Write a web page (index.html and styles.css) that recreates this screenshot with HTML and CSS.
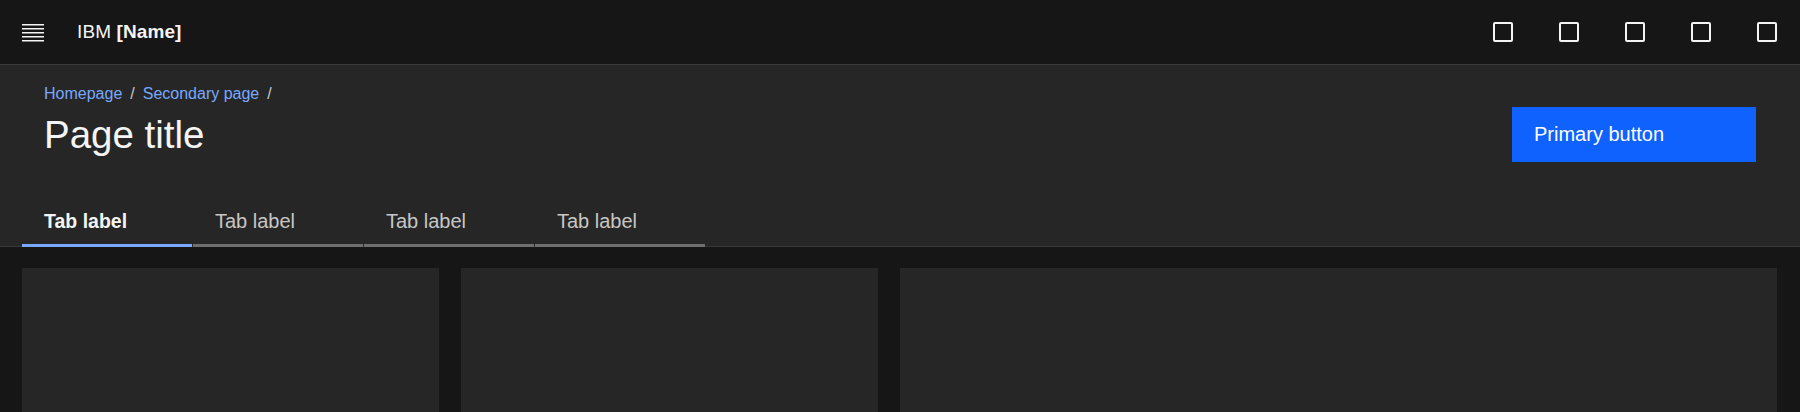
FILE: index.html
```html
<!DOCTYPE html>
<html lang="en">
<head>
<meta charset="utf-8">
<title>IBM [Name]</title>
<link rel="stylesheet" href="styles.css">
</head>
<body>
<header class="topbar">
  <button class="menu-btn" aria-label="Menu">
    <svg width="22" height="18" viewBox="0 0 22 18" aria-hidden="true">
      <g fill="#f4f4f4">
        <rect x="0" y="0" width="22" height="1.5"/>
        <rect x="0" y="4" width="22" height="1.5"/>
        <rect x="0" y="8" width="22" height="1.5"/>
        <rect x="0" y="12" width="22" height="1.5"/>
        <rect x="0" y="16" width="22" height="1.5"/>
      </g>
    </svg>
  </button>
  <a class="brand" href="#">IBM <strong>[Name]</strong></a>
  <nav class="actions">
    <button class="action" aria-label="Action 1"><svg width="20" height="20" viewBox="0 0 20 20"><rect x="1" y="1" width="18" height="18" rx="1" fill="none" stroke="#f4f4f4" stroke-width="2"/></svg></button>
    <button class="action" aria-label="Action 2"><svg width="20" height="20" viewBox="0 0 20 20"><rect x="1" y="1" width="18" height="18" rx="1" fill="none" stroke="#f4f4f4" stroke-width="2"/></svg></button>
    <button class="action" aria-label="Action 3"><svg width="20" height="20" viewBox="0 0 20 20"><rect x="1" y="1" width="18" height="18" rx="1" fill="none" stroke="#f4f4f4" stroke-width="2"/></svg></button>
    <button class="action" aria-label="Action 4"><svg width="20" height="20" viewBox="0 0 20 20"><rect x="1" y="1" width="18" height="18" rx="1" fill="none" stroke="#f4f4f4" stroke-width="2"/></svg></button>
    <button class="action" aria-label="Action 5"><svg width="20" height="20" viewBox="0 0 20 20"><rect x="1" y="1" width="18" height="18" rx="1" fill="none" stroke="#f4f4f4" stroke-width="2"/></svg></button>
  </nav>
</header>

<section class="page-header">
  <div class="page-header-inner">
    <ol class="breadcrumb">
      <li><a href="#">Homepage</a><span class="sep">/</span></li>
      <li><a href="#">Secondary page</a><span class="sep">/</span></li>
    </ol>
    <div class="title-row">
      <h1 class="page-title">Page title</h1>
      <button class="btn-primary">Primary button</button>
    </div>
  </div>
  <div class="tabs">
    <a class="tab active" href="#">Tab label</a>
    <a class="tab" href="#">Tab label</a>
    <a class="tab" href="#">Tab label</a>
    <a class="tab" href="#">Tab label</a>
  </div>
</section>

<main class="content">
  <div class="card"></div>
  <div class="card"></div>
  <div class="card"></div>
</main>
</body>
</html>
```

FILE: styles.css
```css
* { box-sizing: border-box; }

html, body {
  margin: 0;
  padding: 0;
}

body {
  background: #161616;
  color: #f4f4f4;
  font-family: "Liberation Sans", Arial, sans-serif;
  overflow: hidden;
}

button {
  font-family: inherit;
  border: 0;
  background: none;
  color: inherit;
  padding: 0;
  cursor: pointer;
}

a { color: inherit; text-decoration: none; }

/* Top bar */
.topbar {
  height: 65px;
  display: flex;
  align-items: center;
  background: #161616;
  border-bottom: 1px solid #393939;
}

.menu-btn {
  width: 66px;
  height: 64px;
  display: flex;
  align-items: center;
  justify-content: center;
  padding-top: 2px;
}

.menu-btn svg { display: block; }

.brand {
  margin-left: 11px;
  font-size: 19px;
  color: #f4f4f4;
  letter-spacing: 0.1px;
}

.brand strong { font-weight: 700; }

.actions {
  margin-left: auto;
  display: flex;
  height: 64px;
}

.action {
  width: 66px;
  height: 64px;
  display: flex;
  align-items: center;
  justify-content: center;
}

.action svg { display: block; }

/* Page header */
.page-header {
  background: #262626;
  border-bottom: 1px solid #393939;
}

.page-header-inner {
  padding: 18px 44px 0 44px;
}

.breadcrumb {
  list-style: none;
  margin: 0;
  padding: 0;
  display: flex;
  font-size: 16px;
  line-height: 22px;
}

.breadcrumb a { color: #78a9ff; }

.breadcrumb .sep {
  color: #c6c6c6;
  margin: 0 8px;
}

.title-row {
  display: flex;
  align-items: center;
  justify-content: space-between;
  height: 55px;
  margin-top: 2px;
}

.page-title {
  margin: 0;
  font-size: 38.5px;
  font-weight: 400;
  line-height: 44px;
  color: #f4f4f4;
}

.btn-primary {
  width: 244px;
  height: 55px;
  background: #0f62fe;
  color: #ffffff;
  font-size: 20px;
  text-align: left;
  padding: 0 22px;
}

.tabs {
  display: flex;
  gap: 1px;
  padding: 0 22px;
  margin-top: 30px;
  margin-bottom: -1px;
}

.tab {
  width: 170px;
  height: 55px;
  padding: 17px 22px 11px;
  font-size: 20px;
  line-height: 24px;
  color: #c6c6c6;
  border-bottom: 3px solid #6f6f6f;
}

.tab.active {
  color: #f4f4f4;
  font-weight: 700;
  font-size: 19.5px;
  border-bottom-color: #78a9ff;
}

/* Content */
.content {
  display: grid;
  grid-template-columns: 417fr 417fr 877fr;
  gap: 22px;
  padding: 21px 23px 0 22px;
}

.card {
  background: #262626;
  height: 320px;
}
```
